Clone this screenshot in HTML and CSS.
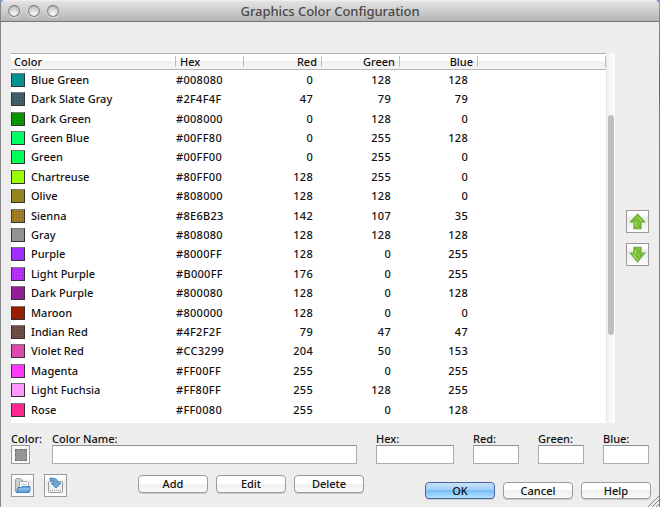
FILE: index.html
```html
<!DOCTYPE html>
<html lang="en">
<head>
<meta charset="utf-8">
<title>Graphics Color Configuration</title>
<link rel="stylesheet" href="styles.css">
</head>
<body>
<div class="window">
  <header class="titlebar">
    <div class="lights"><i></i><i></i><i></i></div>
    <h1><span>Graphics Color Configuration</span></h1>
  </header>
  <main class="content">
    <section class="list">
      <div class="table">
        <div class="row head"><span>Color</span><span>Hex</span><span class="n">Red</span><span class="n">Green</span><span class="n">Blue</span><span></span></div>
        <div class="rows">
        <div class="row"><span class="name"><i class="sw blue-green"></i>Blue Green</span><span class="hex">#008080</span><span class="n">0</span><span class="n">128</span><span class="n">128</span></div>
        <div class="row"><span class="name"><i class="sw slate dots"></i>Dark Slate Gray</span><span class="hex">#2F4F4F</span><span class="n">47</span><span class="n">79</span><span class="n">79</span></div>
        <div class="row"><span class="name"><i class="sw dark-green dots"></i>Dark Green</span><span class="hex">#008000</span><span class="n">0</span><span class="n">128</span><span class="n">0</span></div>
        <div class="row"><span class="name"><i class="sw green-blue"></i>Green Blue</span><span class="hex">#00FF80</span><span class="n">0</span><span class="n">255</span><span class="n">128</span></div>
        <div class="row"><span class="name"><i class="sw green"></i>Green</span><span class="hex">#00FF00</span><span class="n">0</span><span class="n">255</span><span class="n">0</span></div>
        <div class="row"><span class="name"><i class="sw chartreuse"></i>Chartreuse</span><span class="hex">#80FF00</span><span class="n">128</span><span class="n">255</span><span class="n">0</span></div>
        <div class="row"><span class="name"><i class="sw olive"></i>Olive</span><span class="hex">#808000</span><span class="n">128</span><span class="n">128</span><span class="n">0</span></div>
        <div class="row"><span class="name"><i class="sw sienna dots"></i>Sienna</span><span class="hex">#8E6B23</span><span class="n">142</span><span class="n">107</span><span class="n">35</span></div>
        <div class="row"><span class="name"><i class="sw gray"></i>Gray</span><span class="hex">#808080</span><span class="n">128</span><span class="n">128</span><span class="n">128</span></div>
        <div class="row"><span class="name"><i class="sw purple"></i>Purple</span><span class="hex">#8000FF</span><span class="n">128</span><span class="n">0</span><span class="n">255</span></div>
        <div class="row"><span class="name"><i class="sw light-purple dots"></i>Light Purple</span><span class="hex">#B000FF</span><span class="n">176</span><span class="n">0</span><span class="n">255</span></div>
        <div class="row"><span class="name"><i class="sw dark-purple"></i>Dark Purple</span><span class="hex">#800080</span><span class="n">128</span><span class="n">0</span><span class="n">128</span></div>
        <div class="row"><span class="name"><i class="sw maroon"></i>Maroon</span><span class="hex">#800000</span><span class="n">128</span><span class="n">0</span><span class="n">0</span></div>
        <div class="row"><span class="name"><i class="sw indian dots"></i>Indian Red</span><span class="hex">#4F2F2F</span><span class="n">79</span><span class="n">47</span><span class="n">47</span></div>
        <div class="row"><span class="name"><i class="sw violet"></i>Violet Red</span><span class="hex">#CC3299</span><span class="n">204</span><span class="n">50</span><span class="n">153</span></div>
        <div class="row"><span class="name"><i class="sw magenta"></i>Magenta</span><span class="hex">#FF00FF</span><span class="n">255</span><span class="n">0</span><span class="n">255</span></div>
        <div class="row"><span class="name"><i class="sw fuchsia"></i>Light Fuchsia</span><span class="hex">#FF80FF</span><span class="n">255</span><span class="n">128</span><span class="n">255</span></div>
        <div class="row"><span class="name"><i class="sw rose"></i>Rose</span><span class="hex">#FF0080</span><span class="n">255</span><span class="n">0</span><span class="n">128</span></div>
        </div>
      </div>
      <div class="scrollbar"><div class="thumb"></div></div>
      <div class="movers">
        <button class="tool" aria-label="Move up"><svg width="17" height="17" viewBox="0 0 17 17"><path d="M8.5 1.2 15.6 9H12v6.8H5V9H1.400z" fill="#83c83c" stroke="#67a33a" stroke-width="1.100"/><path d="M8.500 3.500 12.500 8M6.500 9v5.500" stroke="#b4e36a" fill="none"/><path d="M8 5h1M6 7h1M10 8h1M8 11h1M10 13h1M6 14h1" stroke="#4b8a20"/></svg></button>
        <button class="tool" aria-label="Move down"><svg width="17" height="17" viewBox="0 0 17 17"><path d="M5 1.200h7V7h3.600L8.500 15.800 1.400 7H5z" fill="#83c83c" stroke="#67a33a" stroke-width="1.100"/><path d="M6.500 2.500V8M4 8.500 8.500 14" stroke="#b4e36a" fill="none"/><path d="M8 4h1M10 6h1M7 8h1M11 9h1M8 11h1M6 3h1" stroke="#4b8a20"/></svg></button>
      </div>
    </section>
    <section class="fields">
      <div class="field"><label>Color:</label><button class="well" aria-label="Color"><i></i></button></div>
      <label class="field">Color Name:<input type="text"></label>
      <label class="field">Hex:<input type="text"></label>
      <label class="field">Red:<input type="text"></label>
      <label class="field">Green:<input type="text"></label>
      <label class="field">Blue:<input type="text"></label>
    </section>
    <footer class="actions">
      <div class="files">
        <button class="tool" aria-label="Open"><svg width="17" height="17" viewBox="0 0 17 17"><path d="M1.500 14.500v-12l1-1h4l1 1.500h1v11z" fill="#c9cdd0" stroke="#9a9fa3"/><path d="M5.500 4.500h8l1 1V12h-9z" fill="#fafafa" stroke="#a9adb0"/><path d="M7.500 7.500h5" stroke="#c4c4c4"/><path d="M2.500 15.500l1.500-5h3l1-1h8v4l-1 2z" fill="#6ba4dc" stroke="#4580bd"/><path d="M4.500 12h11" stroke="#a5cdf0"/></svg></button>
        <button class="tool" aria-label="Save"><svg width="17" height="17" viewBox="0 0 17 17"><rect x="1.500" y="4.500" width="14" height="11" rx="1" fill="#eceeef" stroke="#989ca0"/><path d="M3 13.500h11" stroke="#a5a5a5" stroke-dasharray="1 1"/><path d="M3 1.200C8 .6 11 2.500 11 6h3l-5 5-5-5h3C7 4 5.500 3.300 3 3.500z" fill="#6aa7dc" stroke="#3c78b0" stroke-width=".8"/></svg></button>
      </div>
      <div class="group edit"><button class="btn">Add</button><button class="btn">Edit</button><button class="btn">Delete</button></div>
      <div class="group confirm"><button class="btn primary">OK</button><button class="btn">Cancel</button><button class="btn">Help</button></div>
    </footer>
  </main>
  <svg class="grip" width="12" height="12" viewBox="0 0 12 12"><path d="M1 12 12 1M5 12l7-7M9 12l3-3" stroke="#858585"/></svg>
</div>
</body>
</html>
```
FILE: styles.css
```css
* { box-sizing: border-box; }

body {
  margin: 0;
  width: 660px;
  height: 507px;
  overflow: hidden;
  background: linear-gradient(#7b9abd 0, #55677f 90px, #777 110px, #858585);
  color: #111;
  font: 500 11px/14px "Noto Sans", "Open Sans", sans-serif;
}

button, input { font: inherit; color: inherit; margin: 0; padding: 0; }

.window {
  position: relative;
  width: 659px;
  height: 507px;
  border-left: 1px solid #858585;
  border-radius: 5px 5px 0 0;
  background: #ededed;
  overflow: hidden;
}

.titlebar {
  display: grid;
  grid-template-columns: 64px 1fr 64px;
  align-items: center;
  height: 22px;
  border-top: 1px solid #eee;
  border-bottom: 1px solid #747474;
  background: linear-gradient(#e4e4e4, #b5b5b5);
}

.lights { display: flex; gap: 7.500px; padding-left: 7px; }
.lights i {
  width: 12px;
  height: 12px;
  border: 1px solid #858585;
  border-top-color: #707070;
  border-radius: 50%;
  background: radial-gradient(circle at 50% 75%, #fafafa, #d1d1d1 55%, #aaa);
  box-shadow: 0 1px 0 #e5e5e5;
}

.titlebar h1 {
  margin: 0;
  text-align: center;
  color: #484848;
  font-size: 13px;
  line-height: 20px;
  font-weight: 500;
  letter-spacing: -.05px;
}

.content { padding: 31px 0 0 10px; }

.list { display: flex; height: 370px; }
.table { width: 595px; background: #fff; }

.row {
  display: grid;
  grid-template-columns: 165px 68px 78px 78px 78px 1fr;
  align-items: center;
  height: 19.420px;
}
.row .n { padding-right: 9px; text-align: right; letter-spacing: .3px; }
.rows .row > span { white-space: nowrap; }
.rows .n:last-child { padding-right: 10px; }
.hex { letter-spacing: .3px; }

.head {
  height: 17px;
  border-top: 1px solid #b0b0b0;
  border-bottom: 1px solid #b5b5b5;
  background: linear-gradient(#fff 50%, #f0f0f0 50%, #f5f5f5);
}
.head span { height: 11px; line-height: 12px; border-right: 1px solid #bdbdbd; padding-left: 3px; }
.head span:nth-child(2) { padding-left: 4px; }
.head .n { padding-right: 4px; letter-spacing: 0; }

.name { display: flex; align-items: center; gap: 6px; }
.sw {
  width: 14px;
  height: 14px;
  border: 1px solid #333;
  border-top-color: #777;
  background-color: var(--c);
}
.dots {
  background-image: radial-gradient(circle, #0004 .5px, transparent .8px);
  background-size: 3px 3px;
}
.blue-green { --c: #009391; }
.slate { --c: #42616e; }
.dark-green { --c: #0a9a00; }
.green-blue { --c: #00ff66; }
.green { --c: #00ff58; }
.chartreuse { --c: #99ff00; }
.olive { --c: #93841d; }
.sienna { --c: #a47d24; }
.gray { --c: #929292; }
.purple { --c: #a030ff; }
.light-purple { --c: #b930ff; }
.dark-purple { --c: #941e99; }
.maroon { --c: #962000; }
.indian { --c: #705044; }
.violet { --c: #df48ad; }
.magenta { --c: #ff38ff; }
.fuchsia { --c: #ff99ff; }
.rose { --c: #ff2892; }

.scrollbar {
  width: 9px;
  padding: 62px 1px 0 1px;
  border-left: 1px solid #e6e6e6;
  background: linear-gradient(90deg, #f1f1f1, #fff);
}
.thumb { width: 6px; height: 220px; border-radius: 3px; background: #bfbfbf; }

.movers { display: flex; flex-direction: column; gap: 10px; padding: 157px 0 0 11px; }
.tool {
  display: flex;
  align-items: center;
  justify-content: center;
  width: 23px;
  height: 23px;
  border: 1px solid #999;
  background: linear-gradient(#fff 0 15%, #eaeaea 35%, #fcfcfc);
}
.tool svg { display: block; flex: none; }

.fields {
  display: grid;
  grid-template-columns: 22px 305px 78px 46px 46px 46px;
  column-gap: 19px;
  margin-top: 9px;
}
.field { display: flex; flex-direction: column; min-width: 0; white-space: nowrap; line-height: 13px; }
.fields input {
  width: 100%;
  height: 19px;
  border: 1px solid #adadad;
  border-top-color: #8e8e8e;
  background: #fff;
}
.well {
  display: grid;
  place-items: center;
  width: 19px;
  height: 19px;
  border: 1px solid #9b9b9b;
  background: #f8f8f8;
}
.well i { width: 12px; height: 12px; border: 1px dashed #777; background: #959595; }

.actions { display: flex; align-items: flex-start; padding-top: 10px; }
.files { display: flex; gap: 10px; }
.group { display: flex; gap: 8px; }
.edit { padding: 1px 0 0 71px; }
.confirm { padding: 8px 0 0 61px; }
.btn {
  width: 70px;
  height: 18px;
  border: 1px solid #9a9a9a;
  border-radius: 4px;
  background: linear-gradient(#fff 50%, #efefef 50%, #fafafa);
  box-shadow: 0 1px 0 #ccc;
  line-height: 14px;
}
.confirm .btn { height: 17px; }
.primary {
  border-color: #46659f;
  background: linear-gradient(#c9e3fa, #9fcff7 50%, #78bcf3 50%, #b3e3ff);
}

.grip { position: absolute; right: 0; bottom: 0; }
```
